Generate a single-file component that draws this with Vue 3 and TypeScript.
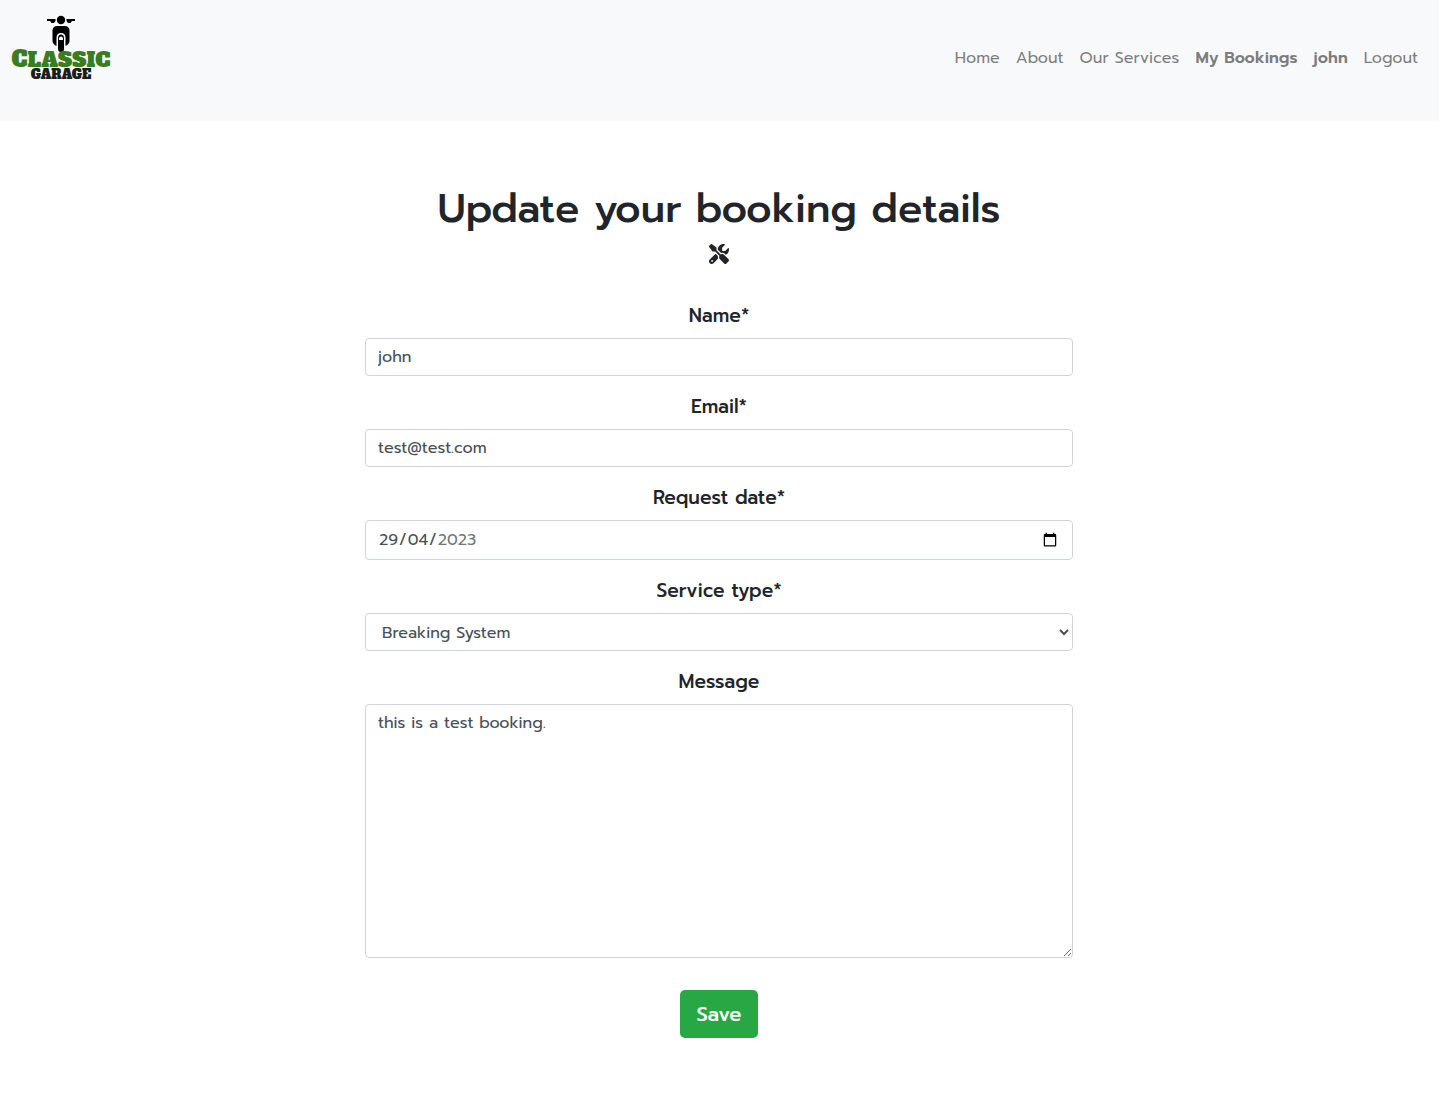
<script setup lang="ts">
import { reactive } from 'vue'

interface NavLink {
  label: string
  strong?: boolean
}

const links: NavLink[] = [
  { label: 'Home' },
  { label: 'About' },
  { label: 'Our Services' },
  { label: 'My Bookings', strong: true },
  { label: 'john', strong: true },
  { label: 'Logout' },
]

const services: string[] = ['Breaking System', 'Oil Change', 'Full Service']

const booking = reactive({
  name: 'john',
  email: 'test@test.com',
  date: '2023-04-29',
  service: 'Breaking System',
  message: 'this is a test booking.',
})
</script>

<template>
  <div class="page">
    <header class="navbar">
      <a class="brand" href="#" aria-label="Classic Garage">
        <svg class="logo" viewBox="0 0 104 72" aria-hidden="true">
          <g fill="#000">
            <circle cx="52" cy="6" r="4.200" />
            <path d="M38 5h8.500v2l-1.500 2h-2.500l-1.500-2h-3zM66 5h-8.500v2l1.500 2h2.500l1.500-2h3z" />
            <path d="M48.500 12h7q5 0 5 4.500v10.500q0 3-4 5v-8q0-5-4.500-5t-4.500 5v8q-4-2-4-5v-10.500q0-4.500 5-4.500z" />
            <path fill-rule="evenodd" d="M49 35v-10.500q0-4 3-4t3 4V35q0 3-3 3t-3-3zM50 26h4v-1.500q0-2-2-2t-2 2z" />
          </g>
          <text class="logo-top" x="52" y="53"><tspan class="cap">C</tspan>LASSIC</text>
          <text class="logo-bottom" x="52" y="65">GARAGE</text>
        </svg>
      </a>
      <nav class="links">
        <a v-for="link in links" :key="link.label" href="#" :class="{ strong: link.strong }">{{ link.label }}</a>
      </nav>
    </header>

    <main class="content">
      <h1>Update your booking details</h1>
      <svg class="tools" viewBox="0 0 512 512" aria-hidden="true">
        <path d="M78.6 5C69.1-2.4 55.6-1.5 47 7L7 47c-8.500 8.500-9.400 22-2.100 31.600l80 104c4.500 5.900 11.600 9.400 19 9.400h54.100l109 109c-14.700 29-10 65.400 14.300 89.600l112 112c12.500 12.500 32.800 12.500 45.300 0l64-64c12.500-12.500 12.500-32.800 0-45.300l-112-112c-24.200-24.200-60.600-29-89.600-14.300l-109-109V104c0-7.500-3.500-14.500-9.400-19L78.600 5zM19.900 396.100C7.200 408.800 0 426.100 0 444.100C0 481.600 30.400 512 67.900 512c18 0 35.300-7.200 48-19.900L233.700 374.300c-7.800-20.900-9-43.600-3.600-65.100l-61.700-61.700L19.900 396.100zM512 144c0-10.500-1.100-20.700-3.200-30.500c-2.400-11.200-16.100-14.100-24.200-6l-63.900 63.900c-3 3-7.100 4.700-11.300 4.700H352c-8.800 0-16-7.200-16-16V102.600c0-4.200 1.700-8.300 4.700-11.300l63.900-63.900c8.100-8.100 5.200-21.800-6-24.200C388.700 1.100 378.500 0 368 0C288.500 0 224 64.500 224 144l0 .8 85.300 85.300c36-9.100 75.800 .5 104 28.700L429 274.500c49-23 83-72.800 83-130.500zM56 432a24 24 0 1 1 48 0 24 24 0 1 1 -48 0z" />
      </svg>

      <form class="form" @submit.prevent>
        <div class="group">
          <label for="name">Name*</label>
          <input id="name" v-model="booking.name" class="control" type="text" />
        </div>
        <div class="group">
          <label for="email">Email*</label>
          <input id="email" v-model="booking.email" class="control" type="email" />
        </div>
        <div class="group">
          <label for="date">Request date*</label>
          <input id="date" v-model="booking.date" class="control date" type="date" />
        </div>
        <div class="group">
          <label for="service">Service type*</label>
          <select id="service" v-model="booking.service" class="control">
            <option v-for="service in services" :key="service" :value="service">{{ service }}</option>
          </select>
        </div>
        <div class="group">
          <label for="message">Message</label>
          <textarea id="message" v-model="booking.message" class="control message"></textarea>
        </div>
        <button class="save" type="submit">Save</button>
      </form>
    </main>
  </div>
</template>

<style>
body {
  margin: 0;
  background: #fff;
}
</style>

<style scoped>
.page,
.control,
.save {
  font-family: Prompt, "Noto Sans", sans-serif;
}

.page {
  color: #212529;
  font-size: 16px;
  line-height: 24px;
}

.navbar {
  display: flex;
  align-items: flex-start;
  justify-content: space-between;
  box-sizing: border-box;
  min-height: 121px;
  padding: 14px 21px 32px 9px;
  background: #f8f9fb;
}

.logo {
  display: block;
  width: 104px;
  height: 72px;
  overflow: visible;
}

.logo text {
  font-family: "Alfa Slab One", "DejaVu Serif", serif;
  font-weight: 400;
  text-anchor: middle;
}

.logo-top {
  fill: #3a7d1e;
  font-size: 21px;
}

.logo-top .cap {
  font-size: 22px;
}

.logo-bottom {
  fill: #1c1e1e;
  font-size: 13px;
}

.links {
  display: flex;
  gap: 16px;
  padding-top: 32px;
}

.links a {
  color: rgba(0, 0, 0, 0.5);
  text-decoration: none;
}

.links .strong {
  font-weight: 600;
}

.content {
  display: flex;
  flex-direction: column;
  align-items: center;
  padding: 64px 17px 72px 16px;
}

h1 {
  margin: 0 0 11px;
  font-size: 40px;
  font-weight: 500;
  line-height: 48px;
  text-align: center;
}

.tools {
  width: 20px;
  height: 20px;
  margin-bottom: 37px;
  fill: #212529;
}

.form {
  display: flex;
  flex-direction: column;
  align-items: center;
  width: 100%;
  max-width: 708px;
}

.group {
  width: 100%;
  margin-bottom: 16px;
}

label {
  display: block;
  margin-bottom: 8px;
  font-size: 19px;
  font-weight: 500;
  line-height: 29px;
  text-align: center;
}

.control {
  display: block;
  box-sizing: border-box;
  width: 100%;
  height: 38px;
  padding: 6px 12px;
  border: 1px solid #ced4da;
  border-radius: 4px;
  background: #fff;
  color: #495057;
  font-size: 16px;
  line-height: 24px;
}

.date {
  height: 40px;
}

/* Day, month, year order whatever the browser's locale */
.date::-webkit-datetime-edit-fields-wrapper {
  display: inline-grid;
  align-items: center;
}

.date::-webkit-datetime-edit-text {
  grid-row: 1;
}

.date::-webkit-datetime-edit-day-field {
  grid-area: 1 / 1;
}

.date::-webkit-datetime-edit-month-field {
  grid-area: 1 / 3;
}

.date::-webkit-datetime-edit-year-field {
  grid-area: 1 / 5;
  color: #757575;
}

.message {
  height: 254px;
  resize: vertical;
}

.save {
  height: 48px;
  margin-top: 16px;
  padding: 0 17px;
  border: 0;
  border-radius: 5px;
  background: #28a745;
  color: #fff;
  font-size: 20px;
  font-weight: 500;
}
</style>
